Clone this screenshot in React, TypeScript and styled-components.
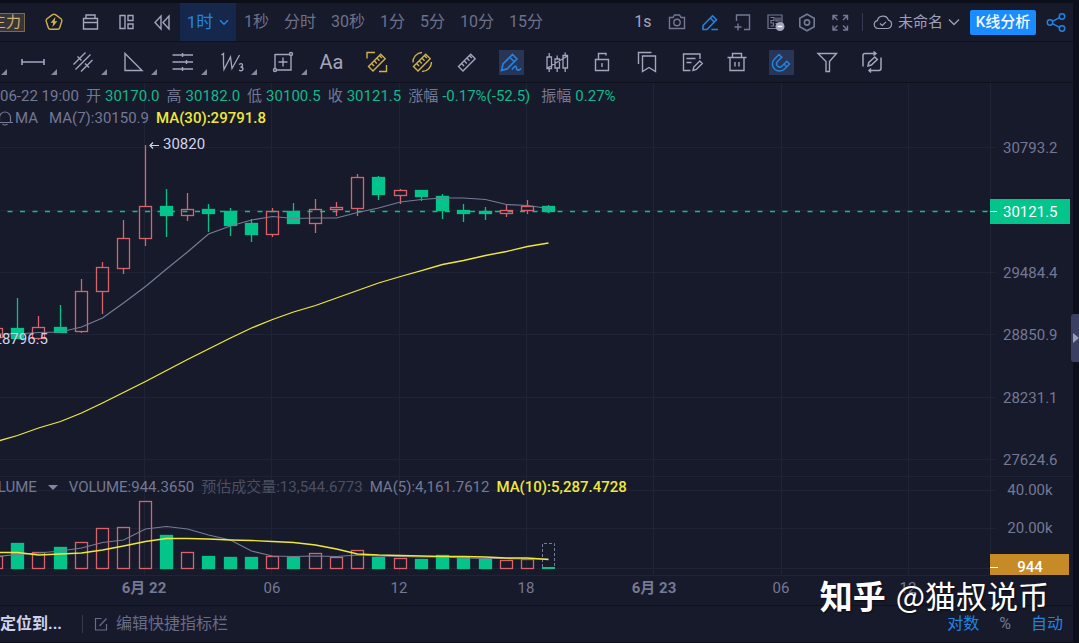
import React from "react";
import styled, { createGlobalStyle, css } from "styled-components";

const color = {
  bg: "#171a2b",
  edge: "#0c0e1a",
  line: "#0e101c",
  grid: "#1f2336",
  muted: "#747894",
  icon: "#a3a5bd",
  dim: "#4c4f60",
  text: "#d0d2ea",
  blue: "#2383e2",
  up: "#d8636a",
  down: "#03c48b",
  gold: "#d0b348",
  yellow: "#eee83a",
};

const GlobalStyle = createGlobalStyle`
  *, *::before, *::after { box-sizing: border-box; }
  body {
    margin: 0;
    background: ${color.edge};
    color: ${color.muted};
    font-family: Roboto, "Noto Sans CJK SC", sans-serif;
    font-size: 15px;
    line-height: 20px;
    overflow-x: hidden;
  }
  button, a { font: inherit; color: inherit; }
`;

/* ---------- shell ---------- */

const Page = styled.div`
  position: relative;
  padding: 3px 6px 1px 0;
  background: ${color.edge};
  overflow: hidden;
`;

const Main = styled.main`
  display: flex;
  flex-direction: column;
  background: ${color.bg};
`;

const SideHandle = styled.button`
  position: absolute;
  right: 0;
  top: 314px;
  width: 8px;
  height: 48px;
  padding: 0;
  border: 0;
  border-radius: 3px 0 0 3px;
  background: #3b4063;
  display: flex;
  align-items: center;
  justify-content: flex-end;
  color: #9a9db8;
`;

const ButtonBase = css`
  display: flex;
  align-items: center;
  justify-content: center;
  flex: none;
  padding: 0;
  border: 0;
  background: none;
  white-space: nowrap;
  cursor: pointer;
`;

/* ---------- first toolbar ---------- */

const Toolbar = styled.div`
  display: flex;
  align-items: stretch;
  justify-content: space-between;
  height: 39px;
  padding-right: 5px;
  border-bottom: 1px solid ${color.line};
`;

const ToolGroup = styled.div`
  display: flex;
  align-items: center;
`;

const MainForceTag = styled.button`
  ${ButtonBase}
  justify-content: flex-end;
  width: 25px;
  height: 19px;
  padding-right: 3px;
  overflow: hidden;
  border: 1px solid #7b6a4d;
  border-left: 0;
  background: #393435;
  color: #cfb077;
`;

const QuickTools = styled.div`
  display: flex;
  gap: 12px;
  padding: 0 6px 0 17px;
`;

const IconButton = styled.button<{ $tone?: string }>`
  ${ButtonBase}
  width: 24px;
  height: 24px;
  color: ${(p) => p.$tone ?? color.icon};
`;

const PeriodSelect = styled.button`
  ${ButtonBase}
  align-self: stretch;
  gap: 6px;
  width: 56px;
  background: #15274a;
  color: ${color.blue};
  font-size: 17px;
`;

const Periods = styled.nav`
  display: flex;
  gap: 15px;
  padding-left: 8px;
  font-size: 16px;
`;

const PeriodButton = styled.button`
  ${ButtonBase}
  color: #6d718c;
`;

const Speed = styled.button`
  ${ButtonBase}
  width: 18px;
  margin-right: 13px;
  color: ${color.icon};
  font-size: 16px;
`;

const ChartActions = styled.div`
  display: flex;
  justify-content: space-between;
  width: 187px;
`;

const Divider = styled.span`
  width: 1px;
  height: 18px;
  background: #363a50;
`;

const LayoutName = styled.button`
  ${ButtonBase}
  gap: 5px;
  color: #9ea0b8;
`;

const LayoutGroup = styled.div`
  display: flex;
  align-items: center;
  gap: 10px;
  padding: 0 8px 0 10px;
`;

const AnalyseButton = styled.button`
  ${ButtonBase}
  width: 66px;
  height: 25px;
  border-radius: 2px;
  background: #1a8cff;
  color: #f4f9ff;
  font-weight: 500;
`;

/* ---------- drawing toolbar ---------- */

const DrawBar = styled.div`
  display: flex;
  align-items: stretch;
  height: 41px;
  padding-left: 8px;
  border-bottom: 1px solid ${color.line};
  position: relative;
`;

const DrawTool = styled.button<{ $menu?: boolean; $tone?: string }>`
  ${ButtonBase}
  position: relative;
  width: ${(p) => (p.$menu ? 50 : 45)}px;
  color: ${(p) => p.$tone ?? color.icon};
  font-size: 20px;
`;

const MenuCorner = styled.span<{ $edge?: boolean }>`
  position: absolute;
  ${(p) => (p.$edge ? "left: 1px;" : "right: 1px;")}
  bottom: 7px;
  border-left: 6px solid transparent;
  border-bottom: 6px solid #85889f;
`;

const FreeTools = styled.div`
  display: flex;
  padding-left: 1px;
`;

const ToolFace = styled.span<{ $active?: boolean }>`
  display: flex;
  align-items: center;
  justify-content: center;
  width: 25px;
  height: 25px;
  background: ${(p) => (p.$active ? "#293554" : "none")};
`;

/* ---------- chart ---------- */

const Pane = styled.section`
  position: relative;
  display: grid;
  grid-template-columns: 1fr 83px;
`;

const PlotSvg = styled.svg`
  display: block;
  width: 100%;
  font-family: Roboto, "Noto Sans CJK SC", sans-serif;
  font-size: 15px;
`;

const Legend = styled.div<{ $top: number }>`
  position: absolute;
  left: 0;
  top: ${(p) => p.$top}px;
  display: flex;
  flex-direction: column;
  gap: 2px;
`;

const LegendRow = styled.div`
  display: flex;
  align-items: center;
  gap: 7px;
  white-space: nowrap;
`;

const Quote = styled.span<{ $last?: boolean }>`
  display: flex;
  gap: 4px;
  margin-left: ${(p) => (p.$last ? 4 : 0)}px;
`;

const QuoteValue = styled.span`
  color: #10b98b;
`;

const SeriesValue = styled.span<{ $tone?: string; $strong?: boolean }>`
  color: ${(p) => p.$tone ?? "inherit"};
  font-weight: ${(p) => (p.$strong ? 500 : 400)};
`;

const IndicatorName = styled.span`
  display: flex;
  align-items: center;
  gap: 2px;
  margin: 0 4px 0 -3px;
`;

const VolumeMenu = styled.button`
  ${ButtonBase}
  gap: 11px;
  margin-left: -22px;
  margin-right: 4px;
`;

const Caret = styled.span`
  border: 5px solid transparent;
  border-top-color: #8286a2;
  border-bottom: 0;
`;

const Watermark = styled.div`
  position: absolute;
  right: 30px;
  bottom: 28px;
  display: flex;
  align-items: center;
  gap: 10px;
  color: #fff;
  font-family: "Noto Sans CJK SC", sans-serif;
  font-size: 31px;
  line-height: 40px;
  text-shadow: 1px 1px 2px rgba(0, 0, 0, 0.6);
  white-space: nowrap;
  pointer-events: none;
`;

const WatermarkBrand = styled.span`
  font-size: 33px;
  font-weight: 700;
`;

/* ---------- footer ---------- */

const Footer = styled.footer`
  display: flex;
  align-items: center;
  height: 37px;
  padding-right: 10px;
  border-top: 1px solid ${color.line};
  font-size: 16px;
`;

const LocateButton = styled.button`
  ${ButtonBase}
  margin-right: 20px;
  color: ${color.text};
  font-weight: 700;
`;

const EditIndicators = styled.button`
  ${ButtonBase}
  gap: 8px;
  margin-left: 11px;
  color: #686c87;
`;

const ScaleOptions = styled.div`
  display: flex;
  gap: 20px;
  margin-left: auto;
`;

const ScaleButton = styled.button<{ $on?: boolean }>`
  ${ButtonBase}
  color: ${(p) => (p.$on ? color.blue : color.muted)};
`;

/* ---------- icons ---------- */

type IconProps = { w?: number; h?: number; sw?: number; children: React.ReactNode };

const Icon = ({ w = 24, h = 24, sw = 1.4, children }: IconProps) => (
  <svg width={w} height={h} viewBox={`0 0 ${w} ${h}`} fill="none" stroke="currentColor" strokeWidth={sw} aria-hidden="true">
    {children}
  </svg>
);

const RulerShape = () => (
  <>
    <path d="M3.5 16.5 15.7 4.3l4.5 4.5L8 21z" />
    <path d="m6.5 13.5 2.6 2.6M9.2 10.8l2.6 2.6M11.9 8.1l2.6 2.6M14.4 5.6l2.4 2.4" />
  </>
);

const icons = {
  bolt: (
    <Icon>
      <path d="M10.6 4.6q1.4-1 2.8 0l5.6 4.2q1.2 1 .8 2.4l-2.1 6.6q-.5 1.5-2 1.5H8.3q-1.5 0-2-1.5l-2.1-6.6q-.4-1.4.8-2.4z" />
      <path d="M13.4 7 8.6 12.8h2.6l-.8 4.2 5-5.8h-2.700z" fill="currentColor" stroke="none" />
    </Icon>
  ),
  briefcase: <Icon><path d="M5.500 8.500h14v10.500h-14zM5.500 12.500h14M8 8.500V5h9v3.500" /></Icon>,
  layout: <Icon><path d="M6 5.500h5v13H6zM14 5.500h5v5h-5zM14 14h5v4.500h-5z" /></Icon>,
  rewind: <Icon><path d="M11 6v13L5 12.500zM19 6v13l-6-6.500z" /></Icon>,
  camera: <Icon><path d="M4.500 7.500h3.500l1.500-2.500h5l1.500 2.500h3.500v11h-15z" /><circle cx="12" cy="12.500" r="3.200" /></Icon>,
  pencil: <Icon sw={1.6}><path d="M5 19.500v-4L14.500 5.800l4 4L9 19.500zM12.300 8l4 4M13.500 19.500h6.500" /></Icon>,
  addFrame: <Icon><path d="M6.500 11V5h13v14.500h-5.500M4.500 17h7M8 13.500v7" /></Icon>,
  qr: (
    <Icon>
      <path d="M5 5h14v13.500H5zM7.500 7.500h3.500v3H8v2.500h2.500v3H7.500M13 7.500v3.500h2v-3.500M17 7.500v4M12.500 13.500h2" strokeWidth="1.200" />
      <circle cx="17" cy="16.500" r="4.500" fill="#a3a5c0" stroke="none" />
      <path d="M14.700 16.500h4.600" stroke="#fff" />
    </Icon>
  ),
  settings: <Icon sw={1.6}><path d="m12 4.200 7.200 4v8.600l-7.200 4-7.200-4V8.200z" /><circle cx="12" cy="12.500" r="2.600" /></Icon>,
  expand: (
    <Icon>
      <path d="M9.500 5.500H5v4.500M5 5.500l4.500 4.500M15 5.500h4.500v4.500M19.500 5.500l-4.500 4.500M9.500 20H5v-4.500M5 20l4.500-4.500M15 20h4.500v-4.500M19.500 20l-4.500-4.500" />
    </Icon>
  ),
  cloud: (
    <Icon w={20} h={20} sw={1.2}>
      <path d="M5 16.500a4 4 0 0 1-.6-7.900 5.700 5.700 0 0 1 11-.5 4.300 4.300 0 0 1-.6 8.400zM7 11.500l2.300 2 3.700-3.700" />
    </Icon>
  ),
  chevron: <Icon w={12} h={8} sw={1.3}><path d="m1 1.500 5 5 5-5" /></Icon>,
  chevronSmall: <Icon w={10} h={7} sw={1.5}><path d="m1 1.200 4 4 4-4" /></Icon>,
  share: (
    <Icon sw={1.5}>
      <circle cx="6" cy="12.500" r="2.700" /><circle cx="18" cy="6.500" r="2.700" /><circle cx="18" cy="18.500" r="2.700" />
      <path d="m8.400 11.300 7.200-3.600M8.400 13.700l7.200 3.600" />
    </Icon>
  ),
  segment: <Icon sw={1.6}><path d="M1 12h22M1 9v6M23 9v6" /></Icon>,
  parallel: (
    <Icon>
      <path d="M2.500 14.500 14.500 2.500M10 21.500 21.500 10M4.500 19.500 10 14M13.500 10.500 19.500 4.500M6.500 6.500l4 4M10 14l3.500-3.500M14 13.500l4 4" />
    </Icon>
  ),
  triangle: <Icon><path d="M4 3.500v17h17z" /></Icon>,
  levels: <Icon><path d="M1.500 5h20.500M1.500 12h20.500M1.500 19h20.500M11.500 3v4M15.500 10v4M11.500 17v4" /></Icon>,
  wave: (
    <Icon w={26} sw={1.3}>
      <path d="M1.500 5 3.500 3.500V14M3.500 14 4 19.500 10.500 7 12 18.500 19.500 5" />
      <path d="M19 14.500q3-2 3.500.5 0 2-2 2 2.500 0 2.500 2.200-.8 2.500-4 1" />
    </Icon>
  ),
  boxPlus: (
    <Icon>
      <path d="M4 4.500h14.500M20 5.500v14.500H5.500M4 18.500V4M12 7.500v9M7.500 12h9" />
      <circle cx="20" cy="4" r="1.500" /><circle cx="4" cy="20" r="1.500" />
    </Icon>
  ),
  rulerFrame: <Icon><RulerShape /><path d="M2 8.500V2.500h8M14 21.500h7.500V15" /></Icon>,
  rulerRound: <Icon><RulerShape /><path d="M3 12.500A9.500 9.500 0 0 1 12 2.500M21.500 12A9.500 9.500 0 0 1 12 21.500" /></Icon>,
  ruler: <Icon><RulerShape /></Icon>,
  brush: <Icon w={25} h={25} sw={1.6}><path d="M2.500 20.500 4 14 13.500 4.500l4.500 4.500L8.500 18.500zM11 7.500l4.500 4.500M2.500 20.500l6-1.500M13 19.500c2.500-3.500 4.500-4.500 4.500-1.500s3 2.500 4.500.5" /></Icon>,
  candles: (
    <Icon>
      <path d="M2 7h4.500v11.500H2zM4.200 3v4M4.200 18.500V22M10 9h4.500v9H10zM12.200 5.500V9M12.200 18v4M18 5.500h4.500V18H18zM20.200 2.500v3M20.200 18v4M1.500 18.500 22.500 6" strokeWidth="1.300" />
    </Icon>
  ),
  lock: <Icon><path d="M5.500 9.500h13v11h-13zM8.500 9.500v-6h7.500v2M12 13v4" /></Icon>,
  bookmark: <Icon><path d="M7.500 6h13v15.500l-6.500-4-6.500 4zM3.500 14V2.500h13" /></Icon>,
  note: <Icon><path d="M20 9V4H3.500v16.500h7M6.500 8.500h9M6.500 12.500h5M13 20.500l.8-3.500 6-6 2.500 2.500-6 6z" /></Icon>,
  trash: <Icon><path d="M2.500 7.500h19M7.500 7V3.500h9V7M5 7.500V20.500h14V7.500M10 12v4.500M14 12v4.500" /></Icon>,
  magnet: <Icon w={25} h={25} sw={1.5}><path d="M10 4.500 5.500 9a7 7 0 0 0 10 10l5-5-2.700-2.700-5 5a3.200 3.200 0 0 1-4.500-4.500L12.800 7.200zM15 14l2.700 2.700" /></Icon>,
  filter: <Icon><path d="M3 3.500h18.500l-7 8V21.500h-3.500V11.500z" /></Icon>,
  swap: (
    <Icon>
      <path d="M3 16.500V5.500q0-2 2-2h11M13.500 1.500l2.500 2-2.500 2M21 7.500V18q0 2.500-2 2.500H9M11 18.500l-2 2 2 2M8 16l.8-3.500 6-5.500 2.500 2.500-6 5.500z" strokeWidth="1.500" />
    </Icon>
  ),
  bell: <Icon w={16} h={16} sw={1.2}><path d="M0 12.500h16M2.500 12.500V7.500a5.500 5.500 0 0 1 11 0v5M5.500 14q2.500 2 5 0" /></Icon>,
  edit: <Icon w={14} h={14} sw={1.2}><path d="M7.500 1.500H1.500v11.500h11V7M5.500 9 12.500 1.500" /></Icon>,
};

/* ---------- chart data ---------- */

type Candle = { up: boolean; high: number; top: number; bottom: number; low: number; vol: number };

const c = (kind: "u" | "d", high: number, top: number, bottom: number, low: number, vol: number): Candle => ({
  up: kind === "u", high, top, bottom, low, vol,
});

const candles: Candle[] = [
  c("u", 328, 328, 337, 337, 556),
  c("d", 298, 328, 338, 338, 543),
  c("u", 316, 327, 338, 339, 552),
  c("d", 305, 327, 332, 332, 547),
  c("u", 279, 291, 331, 332, 542),
  c("u", 262, 267, 291, 313, 528),
  c("u", 220, 238, 268, 273, 527),
  c("u", 145, 206, 238, 245, 501),
  c("d", 189, 206, 215, 236, 535),
  c("u", 193, 209, 215, 220, 552),
  c("d", 204, 209, 213, 231, 556),
  c("d", 208, 211, 225, 235, 557),
  c("d", 219, 223, 234, 241, 557),
  c("u", 208, 211, 234, 236, 556),
  c("d", 203, 211, 223, 223, 557),
  c("u", 199, 209, 223, 232, 553),
  c("u", 202, 207, 209, 215, 557),
  c("u", 174, 177, 208, 215, 550),
  c("d", 176, 177, 194, 199, 557),
  c("u", 189, 190, 195, 203, 558),
  c("d", 190, 190, 196, 200, 559),
  c("d", 194, 196, 210, 218, 555),
  c("d", 204, 210, 213, 221, 557),
  c("d", 207, 211, 213, 219, 559),
  c("u", 205, 210, 213, 216, 560),
  c("u", 200, 206, 210, 213, 559),
  c("d", 205, 206, 211, 212, 567),
];

const STEP = 21.24;
const FIRST = -4;
const xAt = (i: number) => Math.round(FIRST + STEP * i);
const toPoints = (ys: number[]) => ys.map((y, i) => `${xAt(i) + 0.5},${y}`).join(" ");

const ma7 = [334, 334, 332.5, 332, 327, 318, 303, 286.5, 269, 252, 234, 226, 220, 216.5, 218.5, 218, 218, 212.5, 208, 202, 199.5, 198, 198, 199.5, 204.5, 205.5, 208.5];
const ma30 = [441.5, 435.5, 428, 421.5, 413, 403, 392.5, 381.5, 370.5, 359.5, 349, 338, 328, 319.5, 312, 305.5, 298, 290.5, 283, 276.5, 270.5, 264.5, 260.5, 255.5, 251.5, 246.5, 243];
const vma5 = [556.5, 554.5, 553, 551, 548, 542.5, 540, 529, 526.5, 529, 535, 540, 551, 556, 556.5, 556, 556.5, 555, 556, 556.5, 557, 557, 558, 558.5, 558.5, 559, 559];
const vma10 = [552.5, 552.5, 555, 554, 553, 550, 546, 541.5, 538.5, 538.5, 539, 540, 540.5, 541.5, 542.5, 545, 549, 554, 555, 555.5, 556, 556.5, 556.5, 557, 558, 558, 559.5];

const gridX = [144, 271, 399, 526, 653, 781, 908];
const priceTicks: [number, string][] = [[147, "30793.2"], [272, "29484.4"], [334, "28850.9"], [397, "28231.1"], [459, "27624.6"]];
const volumeTicks: [number, string][] = [[490, "40.00k"], [528, "20.00k"]];
const timeTicks: [number, string, boolean][] = [
  [144, "6月 22", true], [272, "06", false], [399, "12", false], [526, "18", false],
  [654, "6月 23", true], [781, "06", false], [908, "12", false],
];

const PRICE_TOP = 83;
const VOLUME_TOP = 476;

const Grid = ({ rows, from, to }: { rows: number[]; from: number; to: number }) => (
  <g stroke={color.grid} shapeRendering="crispEdges">
    {rows.map((y) => <line key={y} x1="0" x2="100%" y1={y + 0.5} y2={y + 0.5} />)}
    {gridX.map((x) => <line key={x} x1={x + 0.5} x2={x + 0.5} y1={from} y2={to} />)}
  </g>
);

const PricePane = () => (
  <Pane aria-label="K线">
    <PlotSvg height="393">
      <g transform={`translate(0 ${-PRICE_TOP})`}>
        <Grid rows={[147, 210, 272, 334, 397, 459]} from={83} to={476} />
        <line x1="-5" x2="100%" y1="211.5" y2="211.5" stroke={color.down} strokeWidth="1.300" strokeDasharray="5 7.5" />
        {candles.map((k, i) => {
          const x = xAt(i);
          const tone = k.up ? color.up : color.down;
          return (
            <g key={i} stroke={tone} strokeWidth="1.300">
              <path d={`M${x + 0.5} ${k.high}V${k.top}M${x + 0.5} ${k.bottom}V${k.low + 1}`} />
              <rect x={x - 5.5} y={k.top + 0.5} width="12" height={k.bottom - k.top} fill={k.up ? "none" : tone} />
            </g>
          );
        })}
        <polyline points={toPoints(ma7)} fill="none" stroke="#777b95" strokeWidth="1.200" />
        <polyline points={toPoints(ma30)} fill="none" stroke={color.yellow} strokeWidth="1.300" />
        <g fill={color.text}>
          <path d="M159 145.5h-9M153 142.500l-3 3 3 3" fill="none" stroke={color.text} strokeWidth="1.200" />
          <text x="163" y="149">30820</text>
          <text x="48" y="344" textAnchor="end">28796.5</text>
        </g>
      </g>
    </PlotSvg>
    <PlotSvg height="393">
      <g transform={`translate(0 ${-PRICE_TOP})`}>
        <g stroke={color.grid} shapeRendering="crispEdges">
          <line x1="0.500" x2="0.500" y1="83" y2="476" />
          {priceTicks.map(([y]) => <line key={y} x1="0" x2="6" y1={y + 0.5} y2={y + 0.5} />)}
        </g>
        <g fill={color.muted}>
          {priceTicks.map(([y, label]) => <text key={y} x="13" y={y + 6}>{label}</text>)}
        </g>
        <rect x="0" y="199" width="80" height="25" fill={color.down} />
        <line x1="0" x2="7" y1="211.5" y2="211.5" stroke="#fff" />
        <text x="13" y="217" fill="#fff">30121.5</text>
      </g>
    </PlotSvg>
    <Legend $top={3}>
      <LegendRow>
        <span>06-22 19:00</span>
        <Quote><span>开</span><QuoteValue>30170.0</QuoteValue></Quote>
        <Quote><span>高</span><QuoteValue>30182.0</QuoteValue></Quote>
        <Quote><span>低</span><QuoteValue>30100.5</QuoteValue></Quote>
        <Quote><span>收</span><QuoteValue>30121.5</QuoteValue></Quote>
        <Quote><span>涨幅</span><QuoteValue>-0.17%(-52.5)</QuoteValue></Quote>
        <Quote $last><span>振幅</span><QuoteValue>0.27%</QuoteValue></Quote>
      </LegendRow>
      <LegendRow>
        <IndicatorName>{icons.bell}MA</IndicatorName>
        <SeriesValue>MA(7):30150.9</SeriesValue>
        <SeriesValue $tone={color.yellow} $strong>MA(30):29791.8</SeriesValue>
      </LegendRow>
    </Legend>
  </Pane>
);

const VolumePane = () => (
  <Pane aria-label="VOLUME">
    <PlotSvg height="100">
      <g transform={`translate(0 ${-VOLUME_TOP})`}>
        <Grid rows={[476, 490, 528, 568, 575]} from={476} to={576} />
        {candles.slice(0, -1).map((k, i) => {
          const tone = k.up ? color.up : color.down;
          return (
            <rect key={i} x={xAt(i) - 5.5} y={k.vol + 0.5} width="12" height={568 - k.vol} fill={k.up ? "none" : tone} stroke={tone} strokeWidth="1.300" />
          );
        })}
        <path d="M542.5 567V543.500h12V567" fill="none" stroke="#777b95" strokeDasharray="3 2" />
        <rect x="542" y="567" width="13" height="2" fill={color.down} />
        <polyline points={toPoints(vma5)} fill="none" stroke="#777b95" strokeWidth="1.200" />
        <polyline points={toPoints(vma10)} fill="none" stroke={color.yellow} strokeWidth="1.300" />
      </g>
    </PlotSvg>
    <PlotSvg height="100">
      <g transform={`translate(0 ${-VOLUME_TOP})`}>
        <g stroke={color.grid} shapeRendering="crispEdges">
          <line x1="0" x2="83" y1="476.5" y2="476.5" />
          <line x1="0.500" x2="0.500" y1="476" y2="576" />
          {volumeTicks.map(([y]) => <line key={y} x1="0" x2="6" y1={y + 0.5} y2={y + 0.5} />)}
        </g>
        <g fill={color.muted}>
          {volumeTicks.map(([y, label]) => <text key={y} x="40" y={y + 5} textAnchor="middle">{label}</text>)}
        </g>
        <rect x="0" y="554" width="79" height="21" fill="#c68b27" />
        <line x1="0" x2="8" y1="567.5" y2="567.5" stroke="#fff" />
        <text x="40" y="572" textAnchor="middle" fill="#fff" fontWeight="500">944</text>
      </g>
    </PlotSvg>
    <Legend $top={1}>
      <LegendRow>
        <VolumeMenu>VOLUME<Caret /></VolumeMenu>
        <SeriesValue>VOLUME:944.3650</SeriesValue>
        <SeriesValue $tone={color.dim}>预估成交量:13,544.6773</SeriesValue>
        <SeriesValue>MA(5):4,161.7612</SeriesValue>
        <SeriesValue $tone={color.yellow} $strong>MA(10):5,287.4728</SeriesValue>
      </LegendRow>
    </Legend>
  </Pane>
);

const TimeAxis = () => (
  <PlotSvg height="29">
    <g fill={color.muted} textAnchor="middle">
      {timeTicks.map(([x, label, strong]) => (
        <text key={x} x={x} y="17" fontWeight={strong ? 700 : 400}>{label}</text>
      ))}
    </g>
  </PlotSvg>
);

/* ---------- toolbar contents ---------- */

const periods = ["1秒", "分时", "30秒", "1分", "5分", "10分", "15分"];

const menuTools: [string, React.ReactNode][] = [
  ["线段", icons.segment], ["平行线", icons.parallel], ["三角形", icons.triangle],
  ["水平线", icons.levels], ["波浪", icons.wave], ["区间", icons.boxPlus],
];

const freeTools: { name: string; face: React.ReactNode; tone?: string; active?: boolean }[] = [
  { name: "文字", face: "Aa" },
  { name: "区间测量", face: icons.rulerFrame, tone: color.gold },
  { name: "周期测量", face: icons.rulerRound, tone: color.gold },
  { name: "测量", face: icons.ruler },
  { name: "画笔", face: icons.brush, tone: color.blue, active: true },
  { name: "隐藏K线", face: icons.candles },
  { name: "锁定", face: icons.lock },
  { name: "书签", face: icons.bookmark },
  { name: "笔记", face: icons.note },
  { name: "删除", face: icons.trash },
  { name: "磁铁", face: icons.magnet, tone: color.blue, active: true },
  { name: "筛选", face: icons.filter },
  { name: "同步", face: icons.swap },
];

export default function App() {
  return (
    <Page>
      <GlobalStyle />
      <Main>
        <Toolbar>
          <ToolGroup>
            <MainForceTag>主力</MainForceTag>
            <QuickTools>
              <IconButton aria-label="闪电" $tone={color.gold}>{icons.bolt}</IconButton>
              <IconButton aria-label="工具箱">{icons.briefcase}</IconButton>
              <IconButton aria-label="布局">{icons.layout}</IconButton>
              <IconButton aria-label="回放">{icons.rewind}</IconButton>
            </QuickTools>
            <PeriodSelect>1时{icons.chevronSmall}</PeriodSelect>
            <Periods>
              {periods.map((p) => <PeriodButton key={p}>{p}</PeriodButton>)}
            </Periods>
          </ToolGroup>
          <ToolGroup>
            <Speed>1s</Speed>
            <ChartActions>
              <IconButton aria-label="截图" $tone={color.muted}>{icons.camera}</IconButton>
              <IconButton aria-label="画线" $tone={color.blue}>{icons.pencil}</IconButton>
              <IconButton aria-label="新窗口" $tone={color.muted}>{icons.addFrame}</IconButton>
              <IconButton aria-label="二维码" $tone={color.muted}>{icons.qr}</IconButton>
              <IconButton aria-label="设置" $tone={color.muted}>{icons.settings}</IconButton>
              <IconButton aria-label="全屏" $tone={color.muted}>{icons.expand}</IconButton>
            </ChartActions>
            <LayoutGroup>
              <Divider />
              <LayoutName>{icons.cloud}未命名{icons.chevron}</LayoutName>
              <AnalyseButton>K线分析</AnalyseButton>
            </LayoutGroup>
            <IconButton aria-label="分享" $tone={color.blue}>{icons.share}</IconButton>
          </ToolGroup>
        </Toolbar>
        <DrawBar>
          <MenuCorner $edge />
          {menuTools.map(([name, face]) => (
            <DrawTool key={name} aria-label={name} $menu>
              {face}
              <MenuCorner />
            </DrawTool>
          ))}
          <FreeTools>
            {freeTools.map((t) => (
              <DrawTool key={t.name} aria-label={t.name} $tone={t.tone}>
                <ToolFace $active={t.active}>{t.face}</ToolFace>
              </DrawTool>
            ))}
          </FreeTools>
        </DrawBar>
        <PricePane />
        <VolumePane />
        <TimeAxis />
        <Footer>
          <LocateButton>定位到...</LocateButton>
          <Divider />
          <EditIndicators>{icons.edit}编辑快捷指标栏</EditIndicators>
          <ScaleOptions>
            <ScaleButton $on>对数</ScaleButton>
            <ScaleButton>%</ScaleButton>
            <ScaleButton $on>自动</ScaleButton>
          </ScaleOptions>
        </Footer>
      </Main>
      <SideHandle aria-label="展开侧栏">
        <svg width="6" height="10" viewBox="0 0 6 10" aria-hidden="true"><path d="M0 0v10l6-5z" fill="currentColor" /></svg>
      </SideHandle>
      <Watermark>
        <WatermarkBrand>知乎</WatermarkBrand>
        <span>@猫叔说币</span>
      </Watermark>
    </Page>
  );
}
